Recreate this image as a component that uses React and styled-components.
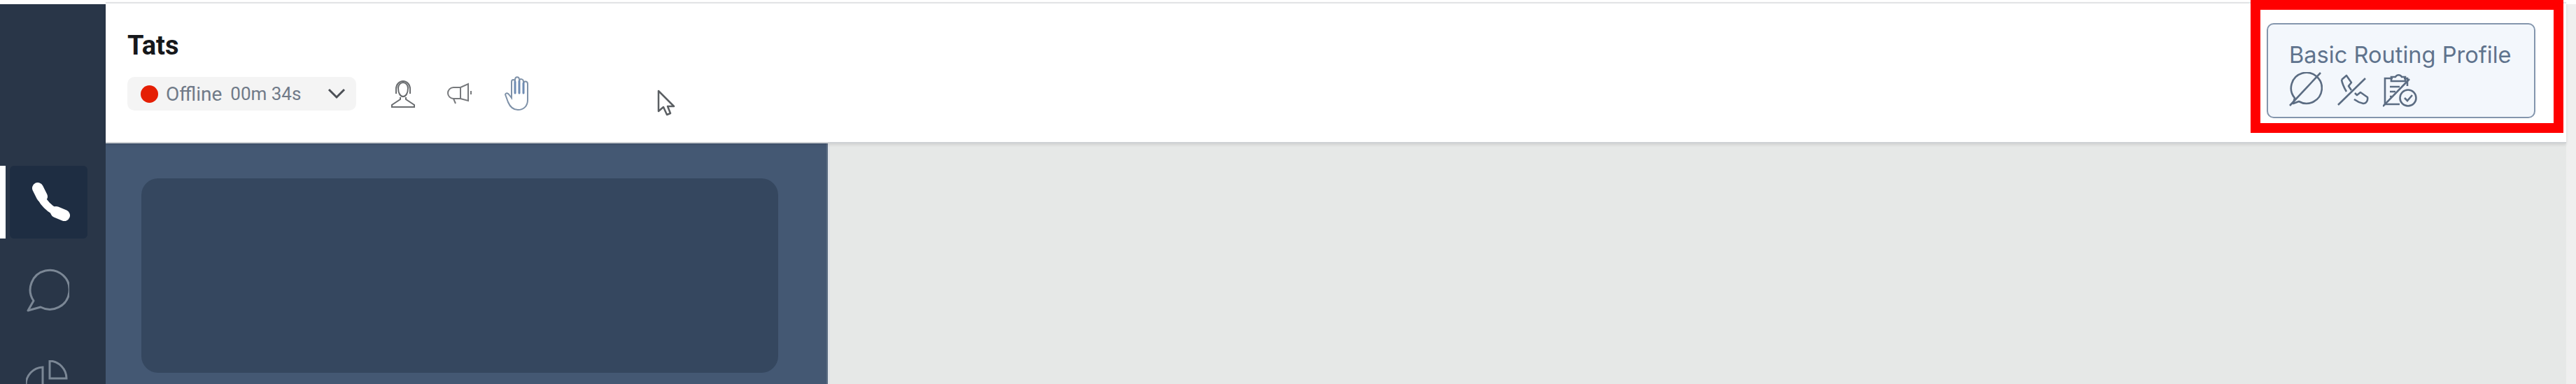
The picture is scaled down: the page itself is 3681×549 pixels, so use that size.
import React from 'react';
import styled, {createGlobalStyle} from 'styled-components';

const Global = createGlobalStyle`
  html, body {
    margin: 0;
    padding: 0;
    width: 3681px;
    height: 549px;
    overflow: hidden;
    background: #fff;
    font-family: Roboto, "Liberation Sans", sans-serif;
  }
`;

const Page = styled.div`
  display: flex;
  width: 3681px;
  height: 549px;
  overflow: hidden;
`;

const Sidebar = styled.nav`
  width: 151px;
  height: 543px;
  margin-top: 6px;
  padding-top: 231px;
  box-sizing: border-box;
  background: #293648;
  display: flex;
  flex-direction: column;
  flex-shrink: 0;
`;

const NavRow = styled.div`
  display: flex;
  align-items: center;
  height: ${props => props.height}px;
  margin-bottom: ${props => props.gap || 0}px;
`;

const ActiveMark = styled.div`
  width: 8px;
  height: 104px;
  background: #fff;
`;

const ActiveTile = styled.div`
  width: 111px;
  height: 104px;
  margin-left: 6px;
  padding-left: 6px;
  box-sizing: border-box;
  background: #1e2d42;
  border-radius: 6px;
  display: flex;
  align-items: center;
  justify-content: center;
`;

const NavIcon = styled.div`
  margin-left: 37px;
  display: flex;
`;

const Main = styled.div`
  flex: 1;
  display: flex;
  flex-direction: column;
  min-width: 0;
`;

const Header = styled.header`
  position: relative;
  z-index: 1;
  height: 202px;
  margin-top: 3px;
  flex-shrink: 0;
  box-sizing: border-box;
  background: #fff;
  border-top: 2px solid #e2e3e5;
  border-bottom: 2px solid #cfd2d5;
  box-shadow: 0 2px 4px rgba(0, 0, 0, 0.1);
  padding-left: 31px;
  display: flex;
  justify-content: space-between;
`;

const Identity = styled.div`
  padding-top: 38px;
`;

const AgentName = styled.div`
  font-size: 38px;
  font-weight: 700;
  line-height: 44px;
  color: #16181b;
`;

const StatusRow = styled.div`
  display: flex;
  align-items: center;
  margin-top: 15px;
`;

const StatusPill = styled.div`
  width: 327px;
  height: 48px;
  box-sizing: border-box;
  padding-left: 19px;
  background: #f4f4f4;
  border-radius: 10px;
  display: flex;
  align-items: center;
  color: #707a88;
  font-size: 28px;
`;

const Dot = styled.span`
  width: 25px;
  height: 25px;
  border-radius: 50%;
  background: #e51f04;
  margin-right: 11px;
`;

const Timer = styled.span`
  margin-left: 12px;
  font-size: 26px;
`;

const Chevron = styled.svg`
  margin-left: auto;
  margin-right: 15px;
  color: #4b4f55;
`;

const Tools = styled.div`
  display: flex;
  align-items: center;
  margin-left: 49px;
  gap: 43px;
`;

const Pointer = styled.svg`
  margin-left: 138px;
  margin-top: 26px;
`;

const Highlight = styled.div`
  width: 447px;
  height: 190px;
  margin-top: -5px;
  margin-right: 4px;
  box-sizing: border-box;
  border: 14px solid #ff0000;
  padding: 19px 26px 0 9px;
  background: #fff;
`;

const ProfileCard = styled.div`
  height: 136px;
  box-sizing: border-box;
  border: 2px solid #8496ad;
  border-radius: 10px;
  background: #f3f7fc;
  padding: 24px 0 0 30px;
`;

const ProfileName = styled.div`
  font-family: Inter, "Noto Sans", sans-serif;
  font-size: 32.6px;
  line-height: 38px;
  color: #5f738d;
  white-space: nowrap;
`;

const ProfileIcons = styled.div`
  display: flex;
  gap: 20px;
  margin-top: 6px;
  color: #5b6c82;
`;

const Content = styled.div`
  flex: 1;
  display: flex;
  min-height: 0;
`;

const QueuePanel = styled.section`
  width: 1032px;
  box-sizing: border-box;
  padding: 50px 69px 0 51px;
  background: #445873;
  border-right: 2px solid #5c6d84;
  flex-shrink: 0;
`;

const QueueCard = styled.div`
  height: 278px;
  background: #35475f;
  border-radius: 24px;
`;

const Workspace = styled.section`
  flex: 1;
  background: #e6e8e7;
  border-left: 3px solid #e0e4e8;
`;

const Gutter = styled.div`
  width: 14px;
  margin-top: 6px;
  background: #efefef;
  flex-shrink: 0;
`;

const Phone = () => (
  <svg width="56" height="56" viewBox="0 0 56 56" fill="none" stroke="#fff" strokeLinecap="round">
    <path d="M10 10 C13 27 27 41 45 46" strokeWidth="11"/>
    <path d="M9 8 L15 20" strokeWidth="16"/>
    <path d="M35 42 L47 47" strokeWidth="16"/>
  </svg>
);

const Chat = () => (
  <svg width="62" height="64" viewBox="0 0 62 64" fill="none" stroke="#7b8795" strokeWidth="3">
    <path d="M3 61 L11 47 A28 28 0 1 1 21 56 Z" strokeLinejoin="round"/>
  </svg>
);

const Pie = () => (
  <svg width="60" height="60" viewBox="0 0 60 60" fill="none" stroke="#7b8795" strokeWidth="3">
    <path d="M24 10 A25 25 0 1 0 50 36 L24 36 Z"/>
    <path d="M34 1 A25 25 0 0 1 58 26 L34 26 Z"/>
  </svg>
);

const Headset = () => (
  <svg width="36" height="42" viewBox="0 0 36 42" fill="none" stroke="#6a6d70" strokeWidth="2">
    <path d="M8 21 V14 A10 11 0 0 1 28 14 V21"/>
    <path d="M11 13 A7 8 0 0 1 25 13 C25 20 22 25 18 25 C14 25 11 20 11 13 Z"/>
    <path d="M14 26 V29 L2 37 V40 H34 V37 L22 29 V26"/>
  </svg>
);

const Megaphone = () => (
  <svg width="40" height="32" viewBox="0 0 40 32" fill="none" stroke="#77797c" strokeWidth="2">
    <path d="M11 7 H21 L32 2 V26 L21 23 H11 A8 8 0 0 1 11 7 Z"/>
    <path d="M21 7 V23"/>
    <path d="M11 23 L14 30 M36 12 V17"/>
  </svg>
);

const Hand = () => (
  <svg width="38" height="50" viewBox="0 0 38 50" fill="none" stroke="#7e91a8" strokeWidth="2" strokeLinecap="round">
    <path d="M2 26 C3 23 6 24 8 27 L11 31 V8 C11 4 16 4 16 8 V5 C16 0 22 0 22 5 V7 C22 3 28 3 28 8 V10 C29 6 34 7 34 11 V34 C34 43 28 48 20 48 C13 48 9 44 6 37 Z"/>
    <path d="M16 8 V24 M22 7 V24 M28 10 V24" strokeWidth="3" stroke="#6f8cb3"/>
  </svg>
);

const NoChat = () => (
  <svg width="48" height="50" viewBox="0 0 48 50" fill="none" stroke="currentColor" strokeWidth="2.6" strokeLinejoin="round">
    <path d="M8 37 A22 22 0 1 1 14 42 L6 45 Z"/>
    <path d="M1 48 L45 1"/>
  </svg>
);

const NoPhone = () => (
  <svg width="46" height="50" viewBox="0 0 46 50" fill="none" stroke="currentColor" strokeWidth="2.6" strokeLinejoin="round">
    <path d="M7 11 L14 5 L21 15 L17 20 L21 26"/>
    <path d="M7 11 C8 17 11 23 14 28"/>
    <path d="M25 39 C29 42 33 44 38 45 C42 45 45 41 44 36 L34 29 L29 33 L26 30"/>
    <path d="M2 47 L41 9"/>
  </svg>
);

const NoTask = () => (
  <svg width="50" height="50" viewBox="0 0 50 50" fill="none" stroke="currentColor" strokeWidth="2.6">
    <path d="M30 9 H35 V20 M14 9 H3 V46 H24"/>
    <path d="M12 13 V7 H18 A5 5 0 0 1 27 7 H32 V13 Z"/>
    <path d="M10 21 H24 M10 28 H18 M10 35 H13"/>
    <circle cx="36" cy="37" r="11.5"/>
    <path d="M31 37 L35 41 L42 33"/>
    <path d="M0 49 L38 10"/>
  </svg>
);

export default function App() {
  return (
    <>
      <Global/>
      <Page>
        <Sidebar>
          <NavRow height={104} gap={42}>
            <ActiveMark/>
            <ActiveTile><Phone/></ActiveTile>
          </NavRow>
          <NavRow height={64} gap={68}>
            <NavIcon><Chat/></NavIcon>
          </NavRow>
          <NavRow height={60}>
            <NavIcon><Pie/></NavIcon>
          </NavRow>
        </Sidebar>
        <Main>
          <Header>
            <Identity>
              <AgentName>Tats</AgentName>
              <StatusRow>
                <StatusPill>
                  <Dot/>
                  Offline
                  <Timer>00m 34s</Timer>
                  <Chevron width="26" height="16" viewBox="0 0 26 16" fill="none" stroke="currentColor" strokeWidth="3">
                    <path d="M2 2 L13 13 L24 2"/>
                  </Chevron>
                </StatusPill>
                <Tools>
                  <Headset/>
                  <Megaphone/>
                  <Hand/>
                  <Pointer width="26" height="38" viewBox="0 0 26 38" fill="#fff" stroke="#5b5f63" strokeWidth="2.5" strokeLinejoin="round">
                    <path d="M2 2 V31 L9 25 L14 36 L19 34 L15 24 H24 Z"/>
                  </Pointer>
                </Tools>
              </StatusRow>
            </Identity>
            <Highlight>
              <ProfileCard>
                <ProfileName>Basic Routing Profile</ProfileName>
                <ProfileIcons>
                  <NoChat/>
                  <NoPhone/>
                  <NoTask/>
                </ProfileIcons>
              </ProfileCard>
            </Highlight>
          </Header>
          <Content>
            <QueuePanel>
              <QueueCard/>
            </QueuePanel>
            <Workspace/>
          </Content>
        </Main>
        <Gutter/>
      </Page>
    </>
  );
}
